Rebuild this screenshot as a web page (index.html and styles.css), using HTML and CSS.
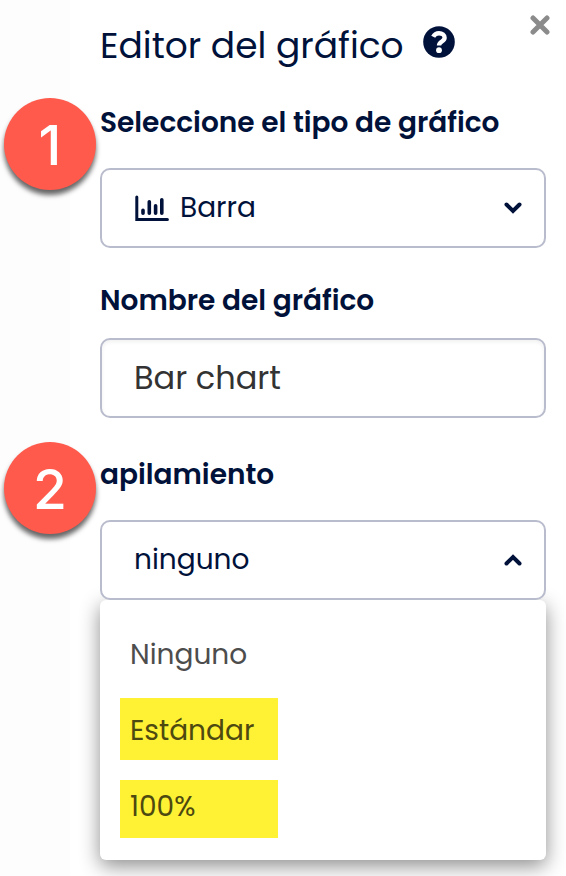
FILE: index.html
```html
<!DOCTYPE html>
<html lang="es">
<head>
    <meta charset="UTF-8">
    <meta name="viewport" content="width=device-width, initial-scale=1.0">
    <title>Editor del gráfico</title>
    <link rel="stylesheet" href="styles.css">
</head>
<body>
    <main class="panel">
        <button type="button" class="close-btn" aria-label="Cerrar">
            <svg viewBox="0 0 20 20" width="20" height="20"><path d="M3 3L17 17M17 3L3 17"/></svg>
        </button>
        <header class="panel-header">
            <h1>Editor del gráfico</h1>
            <button type="button" class="help-btn" aria-label="Ayuda">
                <svg viewBox="0 0 32 32" width="32" height="32">
                    <circle cx="16" cy="16" r="15.8"/>
                    <path class="hook" d="M10.2 10.8C11.6 8.1 13.4 7.2 16 7.2C19.2 7.2 21.6 9.1 21.6 11.8C21.6 15.6 16 15.4 16 19.6"/>
                    <circle class="dot" cx="16" cy="24.2" r="2.9"/>
                </svg>
            </button>
        </header>
        <form>
            <div class="form-group">
                <span class="step step-one">1</span>
                <label for="chartType">Seleccione el tipo de gráfico</label>
                <div class="control">
                    <svg class="chart-icon" viewBox="0 0 34 26" width="34" height="26">
                        <path d="M1.8 2V24.4H32.4"/>
                        <path class="bars" d="M8 15.2V18.2M14.3 6.7V18.2M20.6 10.8V18.2M26.8 4.7V18.2"/>
                    </svg>
                    <select id="chartType" class="with-icon">
                        <option>Barra</option>
                    </select>
                    <svg class="caret" viewBox="0 0 18 12" width="18" height="12"><path d="M2.5 2.5L9 9L15.5 2.5"/></svg>
                </div>
            </div>
            <div class="form-group name-group">
                <label for="chartName">Nombre del gráfico</label>
                <input type="text" id="chartName" value="Bar chart">
            </div>
            <div class="form-group">
                <span class="step step-two">2</span>
                <label for="stacking">apilamiento</label>
                <div class="control">
                    <select id="stacking">
                        <option>ninguno</option>
                    </select>
                    <svg class="caret" viewBox="0 0 18 12" width="18" height="12"><path d="M2.5 9.5L9 3L15.5 9.5"/></svg>
                </div>
                <ul class="menu" role="listbox" aria-label="apilamiento">
                    <li role="option">Ninguno</li>
                    <li role="option" class="marked">Estándar</li>
                    <li role="option" class="marked marked-last">100%</li>
                </ul>
            </div>
        </form>
    </main>
</body>
</html>
```
FILE: styles.css
```css
* {
    box-sizing: border-box;
}

body {
    font-family: Poppins, Inter, sans-serif;
    font-size: 28px;
    line-height: 42px;
    color: #00113a;
    background-color: #fdfdfd;
    margin: 0;
    padding-left: 70px;
}

.panel {
    position: relative;
    min-height: 100vh;
    padding: 19px 20px 16px 30px;
    background-color: #fff;
}

.panel-header {
    display: flex;
    align-items: center;
    gap: 19px;
    margin-bottom: 29px;
}

h1 {
    margin: 0;
    font-size: 36px;
    font-weight: 400;
    line-height: 54px;
}

button {
    display: block;
    padding: 0;
    border: none;
    background: none;
    cursor: pointer;
}

svg {
    display: block;
    fill: none;
    stroke: #00113a;
    stroke-linecap: round;
}

.close-btn {
    position: absolute;
    top: 15px;
    right: 16px;
}

.close-btn svg {
    stroke: #8b8b8b;
    stroke-width: 5;
}

.help-btn {
    margin-bottom: 8px;
}

.help-btn svg {
    fill: #00113a;
    stroke: none;
}

.help-btn .hook {
    fill: none;
    stroke: #fff;
    stroke-width: 4.4;
    stroke-linecap: butt;
}

.help-btn .dot {
    fill: #fff;
}

.form-group {
    position: relative;
    margin-bottom: 32px;
}

.form-group:last-child {
    margin-bottom: 0;
}

.name-group {
    margin-bottom: 36px;
}

label {
    display: block;
    margin-bottom: 24px;
    font-weight: 600;
}

.name-group label {
    margin-bottom: 16px;
}

.control {
    position: relative;
}

select,
input {
    display: block;
    appearance: none;
    width: 100%;
    height: 80px;
    padding: 0 32px;
    border: 2px solid #b9bccc;
    border-radius: 10px;
    background-color: #fff;
    color: inherit;
    font: inherit;
}

select.with-icon {
    padding-left: 78px;
}

input {
    color: #333;
    font-size: 32px;
    box-shadow: inset 0 2px 4px rgba(0, 0, 0, 0.06);
}

.chart-icon {
    position: absolute;
    top: 27px;
    left: 35px;
    stroke-width: 3;
    pointer-events: none;
}

.chart-icon .bars {
    stroke-width: 3.6;
}

.caret {
    position: absolute;
    top: 34px;
    right: 24px;
    stroke-width: 4;
    pointer-events: none;
}

/* numbered callouts beside the labels */
.step {
    position: absolute;
    left: -96px;
    width: 92px;
    height: 92px;
    border-radius: 50%;
    background-color: #ff5a4c;
    box-shadow: 0 5px 5px rgba(0, 0, 0, 0.6);
    color: #fff;
    font-family: Inter, Arial, sans-serif;
    font-size: 55px;
    font-weight: 500;
    line-height: 94px;
    text-align: center;
}

.step-one {
    top: -4px;
}

.step-two {
    top: -12px;
}

.menu {
    margin: 0;
    padding: 34px 20px 22px;
    list-style: none;
    color: #4d4d4d;
    background-color: #fff;
    border-radius: 6px;
    box-shadow: 0 6px 20px rgba(0, 0, 0, 0.45);
}

.menu li {
    width: 158px;
    margin-bottom: 22px;
    padding: 0 10px;
}

.menu .marked {
    margin-bottom: 20px;
    padding: 12px 10px 8px;
    background-color: #fff133;
    color: #4d4910;
}

.menu .marked-last {
    margin-bottom: 0;
    padding: 6px 10px 10px;
}
```
